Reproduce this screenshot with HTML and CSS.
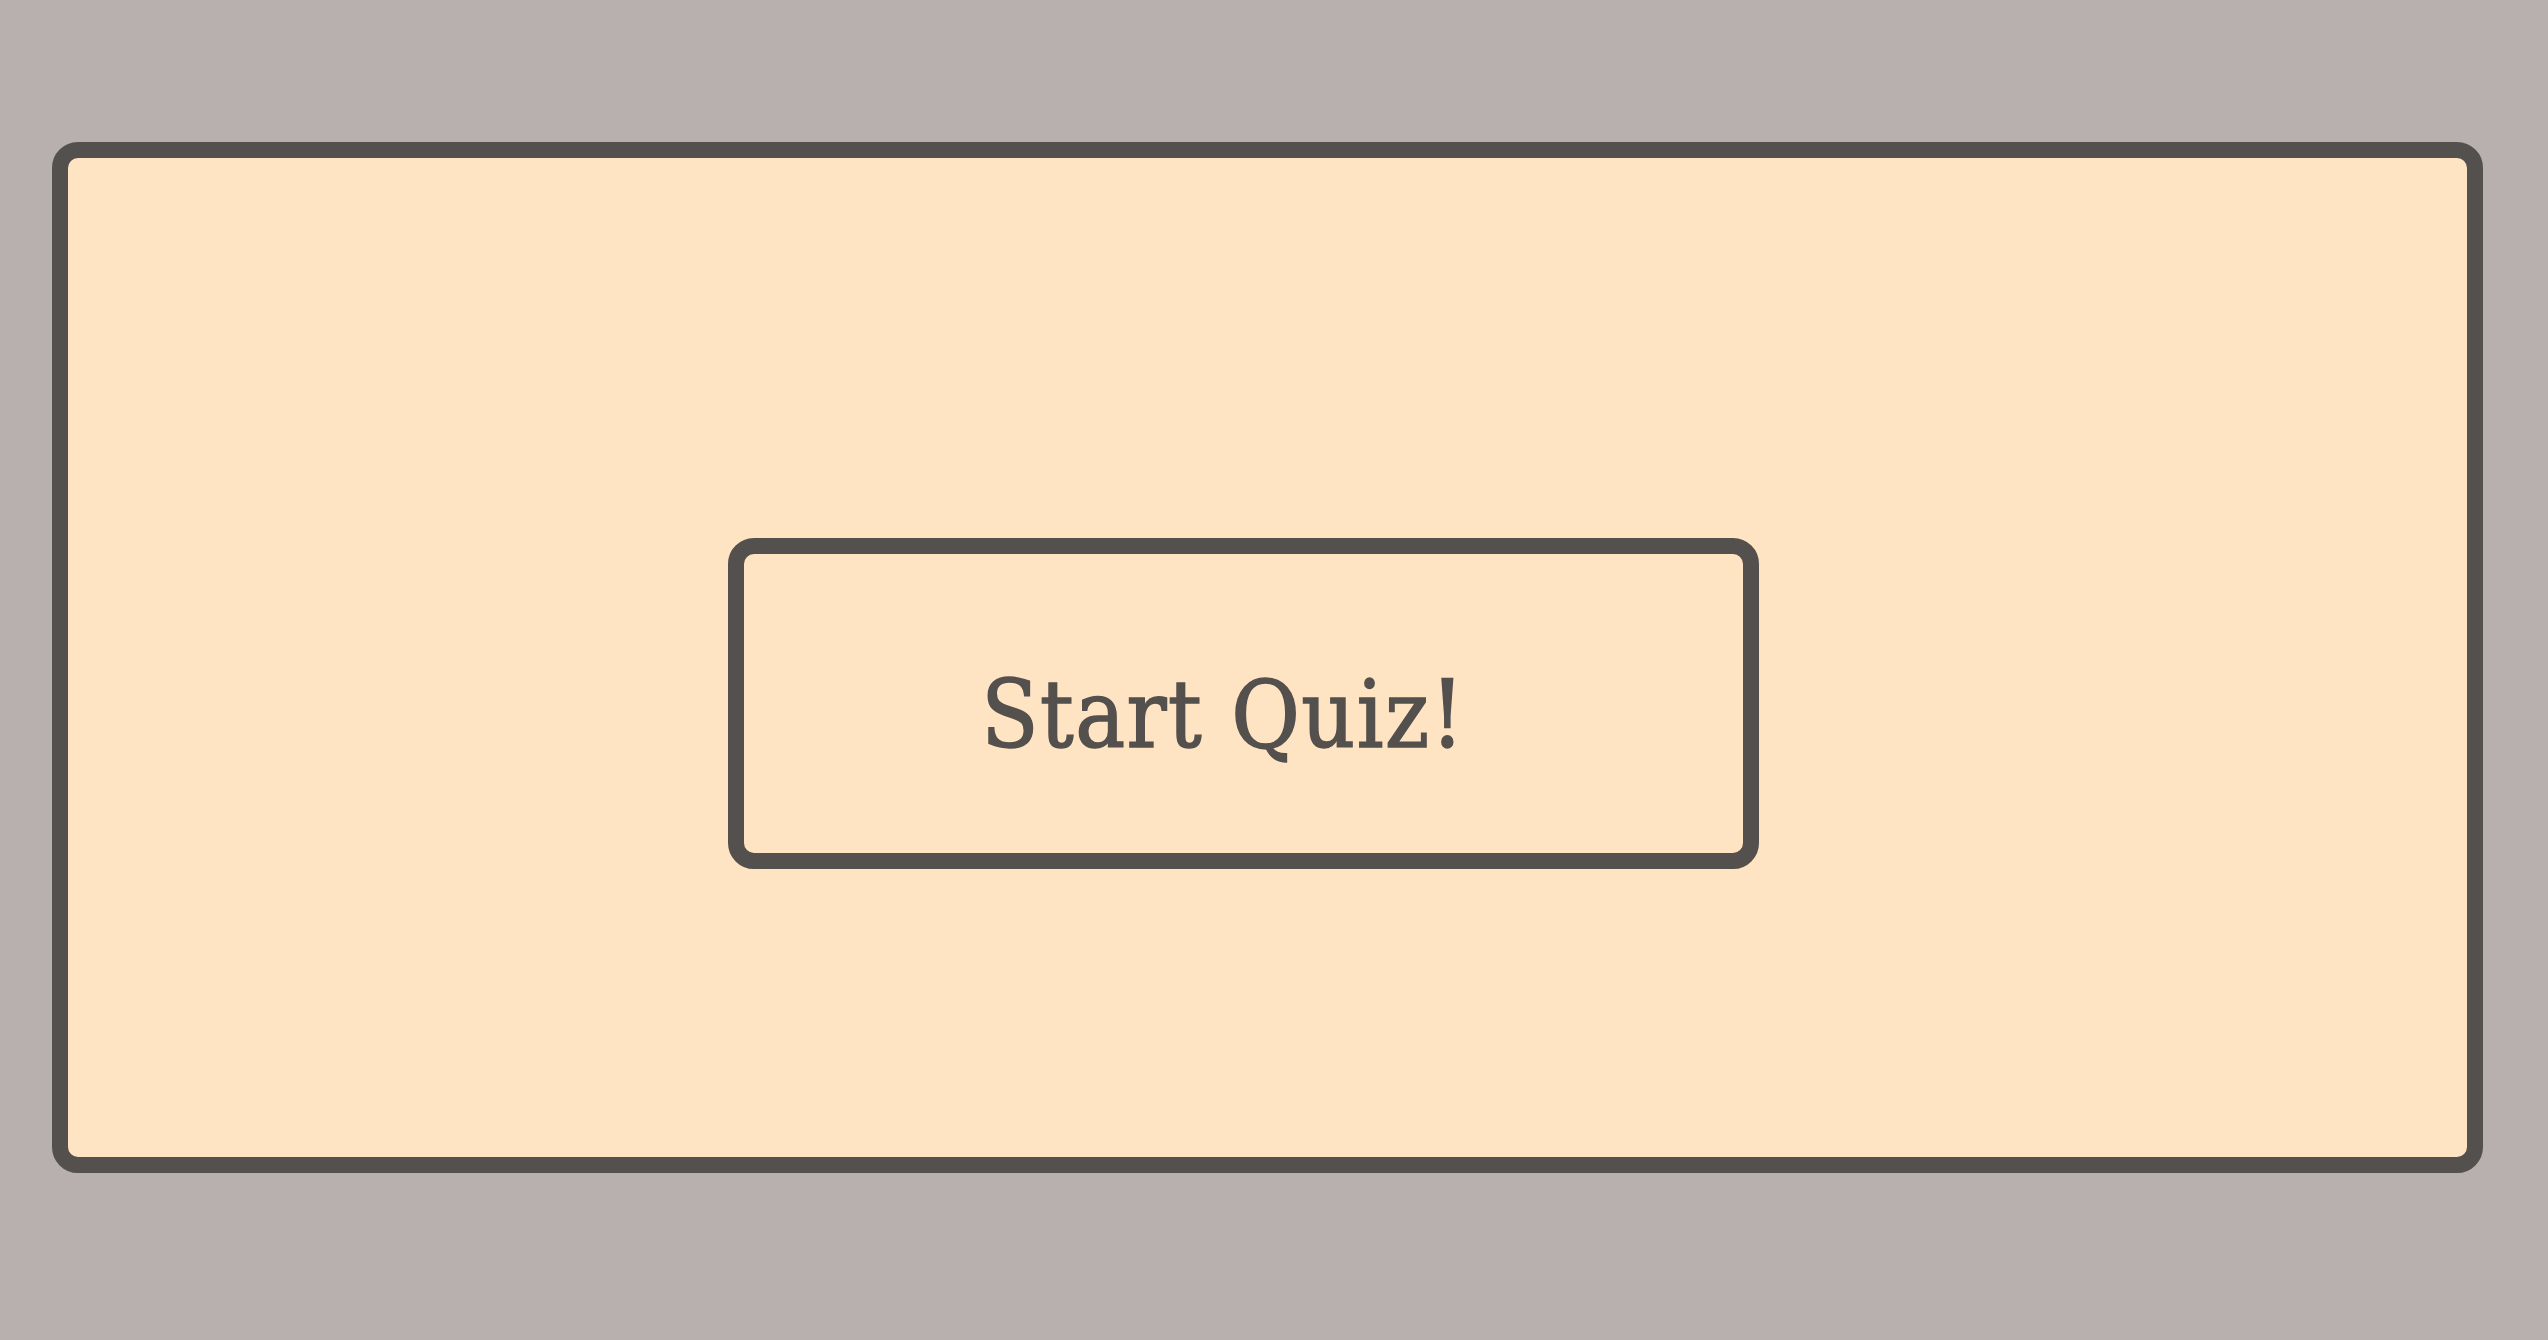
FILE: index.html
```html
<!DOCTYPE html>
<html lang="en">
<head>
<meta charset="utf-8">
<title>Quiz</title>
<link rel="stylesheet" href="styles.css">
</head>
<body>
<main class="frame">
  <button class="start-btn" type="button"><span class="label">Start Quiz!</span></button>
</main>
</body>
</html>
```
FILE: styles.css
```css
html, body {
  margin: 0;
  padding: 0;
  height: 100%;
}
body {
  background: #b7b0ae;
  overflow: hidden;
}
.frame {
  box-sizing: border-box;
  width: 2431px;
  height: 1031px;
  margin: 142px 0 0 52px;
  background: #ffe4c4;
  border: 16px solid #54504d;
  border-radius: 26px;
  padding: 380px 708px 288px 660px;
  display: flex;
}
.start-btn {
  flex: 1;
  box-sizing: border-box;
  background: #ffe4c4;
  border: 16px solid #54504d;
  border-radius: 26px;
  color: #54504d;
  font-family: "DejaVu Serif Condensed", "DejaVu Serif", serif;
  font-stretch: condensed;
  font-weight: normal;
  font-size: 93px;
  letter-spacing: 1.5px;
  padding: 23px 40px 0 0;
  display: flex;
  align-items: center;
  justify-content: center;
  cursor: pointer;
}
.label {
  display: inline-block;
  -webkit-text-stroke: 1.5px #54504d;
}
```
